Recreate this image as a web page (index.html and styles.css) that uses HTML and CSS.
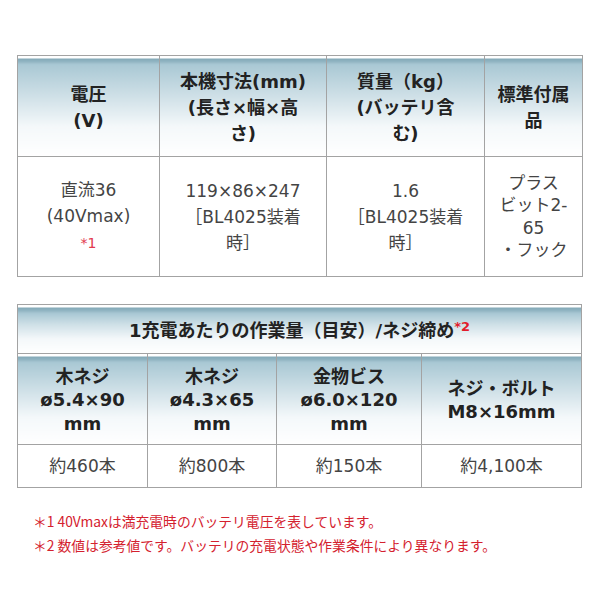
FILE: index.html
```html
<!DOCTYPE html>
<html lang="ja">
<head>
<meta charset="utf-8">
<title>仕様</title>
<link rel="stylesheet" href="styles.css">
</head>
<body>
<div class="page">
  <table class="spec t1">
    <colgroup>
      <col class="c1a"><col class="c1b"><col class="c1c"><col class="c1d">
    </colgroup>
    <tr class="head-row h1">
      <th>電圧<br>(V)</th>
      <th>本機寸法(mm)<br>(長さ×幅×高<br>さ)</th>
      <th>質量（kg）<br>(バッテリ含<br>む)</th>
      <th>標準付属<br>品</th>
    </tr>
    <tr class="body-row b1">
      <td>直流36<br>(40Vmax)<br><span class="ref">*1</span></td>
      <td>119×86×247<br>［BL4025装着<br>時］</td>
      <td>1.6<br>［BL4025装着<br>時］</td>
      <td class="tight">プラス<br>ビット2-<br>65<br>・フック</td>
    </tr>
  </table>

  <table class="spec t2">
    <colgroup>
      <col class="c2a"><col class="c2b"><col class="c2c"><col class="c2d">
    </colgroup>
    <tr class="head-row h2">
      <th colspan="4">1充電あたりの作業量（目安）/ネジ締め<sup class="ref-b">*2</sup></th>
    </tr>
    <tr class="head-row h3">
      <th>木ネジ<br>ø5.4×90<br>mm</th>
      <th>木ネジ<br>ø4.3×65<br>mm</th>
      <th>金物ビス<br>ø6.0×120<br>mm</th>
      <th>ネジ・ボルト<br>M8×16mm</th>
    </tr>
    <tr class="body-row b2">
      <td>約460本</td>
      <td>約800本</td>
      <td>約150本</td>
      <td>約4,100本</td>
    </tr>
  </table>

  <div class="notes">
    <p>＊1&nbsp;40Vmaxは満充電時のバッテリ電圧を表しています。</p>
    <p>＊2&nbsp;数値は参考値です。バッテリの充電状態や作業条件により異なります。</p>
  </div>
</div>
</body>
</html>
```

FILE: styles.css
```css
html, body {
  margin: 0;
  padding: 0;
  background: #ffffff;
}

.page {
  padding: 55px 0 0 17px;
  font-family: "DejaVu Sans", "Noto Sans CJK JP", sans-serif;
}

.spec {
  border-collapse: collapse;
  table-layout: fixed;
  border: 1px solid #a3a3a3;
}

.spec th,
.spec td {
  border: 1px solid #a3a3a3;
  text-align: center;
  vertical-align: middle;
  padding: 0;
}

.t1 { width: 565px; }
.t2 { width: 564px; margin-top: 27px; }

.c1a { width: 142px; }
.c1b { width: 167px; }
.c1c { width: 158px; }
.c1d { width: 98px; }

.c2a { width: 130px; }
.c2b { width: 129px; }
.c2c { width: 145px; }
.c2d { width: 160px; }

.head-row th {
  font-family: "DejaVu Sans", "Noto Sans CJK JP", sans-serif;
  font-weight: bold;
  font-size: 18px;
  line-height: 26px;
  color: #222222;
  background: linear-gradient(to bottom,
    #ffffff 0px, #ffffff 2px,
    #83a9b7 2px, #8fb3c1 5px,
    #a9c8d4 8px,
    #cfe0e7 40%,
    #f4f8fa 70%,
    #ffffff 100%);
}

.h1 th { height: 96px; padding-top: 4px; }
.h2 th { height: 44px; padding-top: 4px; line-height: 24px; }
.h3 th { height: 88px; padding-top: 2px; line-height: 23.5px; }

.body-row td {
  font-size: 17px;
  line-height: 26px;
  color: #444444;
  background: #ffffff;
}

.b1 td { height: 119px; }
.b1 td.tight { line-height: 22.5px; }
.b2 td { height: 42px; }

.ref {
  color: #e2394e;
  font-size: 14px;
}

.ref-b {
  color: #e21b2b;
  font-size: 13px;
  font-weight: bold;
  vertical-align: 6px;
  line-height: 0;
}

.notes {
  margin-top: 21px;
  padding-left: 16px;
  font-family: "Noto Sans CJK JP", sans-serif;
  font-size: 13.8px;
  line-height: 24px;
  color: #d4212e;
}

.notes p {
  margin: 0;
}
```
